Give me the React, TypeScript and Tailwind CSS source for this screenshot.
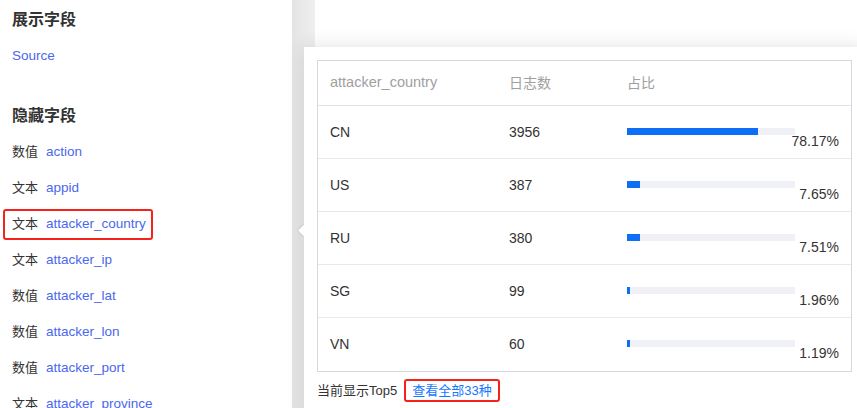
import React from "react";

const font = { fontFamily: '"Liberation Sans", Arial, "Noto Sans CJK SC", sans-serif' };

const fields: { type: string; name: string; selected?: boolean }[] = [
  { type: "数值", name: "action" },
  { type: "文本", name: "appid" },
  { type: "文本", name: "attacker_country", selected: true },
  { type: "文本", name: "attacker_ip" },
  { type: "数值", name: "attacker_lat" },
  { type: "数值", name: "attacker_lon" },
  { type: "数值", name: "attacker_port" },
  { type: "文本", name: "attacker_province" },
];

const rows = [
  { c: "CN", n: "3956", p: 78.17 },
  { c: "US", n: "387", p: 7.65 },
  { c: "RU", n: "380", p: 7.51 },
  { c: "SG", n: "99", p: 1.96 },
  { c: "VN", n: "60", p: 1.19 },
];

export default function App() {
  return (
    <div className="relative flex w-[857px] h-[408px] overflow-hidden bg-white text-[#333]" style={font}>
      {/* left panel */}
      <div className="w-[292px] shrink-0 bg-white flex flex-col">
        <div className="pl-[12px] mt-[8px] h-[24px] leading-[24px] text-[16px] font-bold text-[#333]">展示字段</div>
        <div className="pl-[12px] mt-[14px] h-[20px] leading-[20px] text-[13.5px] text-[#4a68ee]">Source</div>
        <div className="pl-[12px] mt-[38px] h-[24px] leading-[24px] text-[16px] font-bold text-[#333]">隐藏字段</div>
        <div className="mt-[6px] pl-[3px] flex flex-col">
          {fields.map((f) => (
            <div key={f.name} className="h-[36px] flex items-center">
              <span
                className={
                  "inline-flex items-center h-[31px] pl-[7px] pr-[5px] rounded-[3px] border-2 " +
                  (f.selected ? "border-[#f5221b]" : "border-transparent")
                }
              >
                <span className="text-[13px] text-[#333]">{f.type}</span>
                <span className="ml-[8px] text-[13.5px] text-[#4a68ee]">{f.name}</span>
              </span>
            </div>
          ))}
        </div>
      </div>

      {/* scrollbar-ish strip */}
      <div className="w-[23px] shrink-0 bg-gradient-to-r from-[#e4e4e4] to-[#efefef]" />

      {/* right area */}
      <div className="flex-1 bg-white" />

      {/* popover */}
      <div className="absolute left-[304px] top-[47px] w-[561px] h-[380px] bg-white shadow-[0_0_18px_rgba(0,0,0,0.12)] px-[13px] pt-[13px]">
        <div className="absolute left-[-4px] top-[179px] w-[9px] h-[9px] bg-white rotate-45 shadow-[-1px_1px_2px_rgba(0,0,0,0.08)]" />
        <div className="relative border border-[#d3d8e1] text-[14px]">
          <div className="flex h-[45px] items-center border-b border-[#dfe3ea] text-[#a0a0a0]">
            <div className="w-[191px] pl-[12px] text-[14.5px]">attacker_country</div>
            <div className="w-[118px]">日志数</div>
            <div className="flex-1">占比</div>
          </div>
          {rows.map((r, i) => (
            <div
              key={r.c}
              className={
                "flex h-[53px] " + (i < rows.length - 1 ? "border-b border-[#e6e9ee]" : "")
              }
            >
              <div className="w-[191px] pl-[12px] flex items-center text-[#333]">{r.c}</div>
              <div className="w-[118px] flex items-center text-[#333]">{r.n}</div>
              <div className="flex-1 pt-[22px] pr-[12px] flex flex-col">
                <div className="w-[168px] h-[7px] bg-[#eff1f6]">
                  <div className="h-full bg-[#0f6ef6]" style={{ width: `${Math.max(r.p, 1.5)}%` }} />
                </div>
                <div className="-mt-[2px] h-[16px] leading-[16px] text-right text-[#333]">{r.p.toFixed(2)}%</div>
              </div>
            </div>
          ))}
        </div>
        <div className="mt-[7px] flex items-center text-[13px] text-[#333]">
          <span>当前显示Top5</span>
          <span className="ml-[7px] h-[23px] inline-flex items-center px-[6px] rounded-[3px] border-2 border-[#f5221b] text-[#1677ff]">
            查看全部33种
          </span>
        </div>
      </div>
    </div>
  );
}
